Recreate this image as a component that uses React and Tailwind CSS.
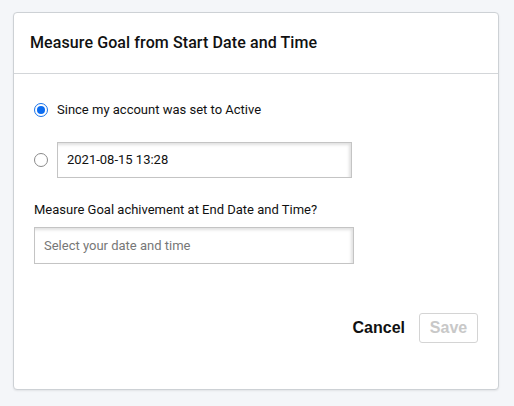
import React from 'react';

const Radio = ({ checked }) => (
  <span
    className={
      checked
        ? 'flex h-[14px] w-[14px] shrink-0 items-center justify-center rounded-full border border-[#1a73e8] bg-white'
        : 'flex h-[14px] w-[14px] shrink-0 items-center justify-center rounded-full border border-[#8a8a8a] bg-white'
    }
  >
    {checked && <span className="h-[8px] w-[8px] rounded-full bg-[#0b6cf0]"></span>}
  </span>
);

const App = () => {
  return (
    <div className="h-[406px] w-[514px] bg-[#f4f6f9] pl-[13px] pt-[12px] font-['Roboto',sans-serif] text-[#111]">
      <div className="h-[378px] w-[486px] rounded-[4px] border border-[#cdd1d5] bg-white shadow-[0_1px_2px_rgba(0,0,0,0.08)]">
        {/* Header */}
        <div className="flex h-[61px] items-center border-b border-[#d3d6d9] px-[16px]">
          <h2 className="text-[16px] font-medium tracking-[0.1px]">Measure Goal from Start Date and Time</h2>
        </div>

        {/* Body */}
        <div className="pl-[20px] pr-[19px]">
          <div className="mt-[29px] flex h-[14px] items-center gap-[9px]">
            <Radio checked />
            <span className="text-[13px]">Since my account was set to Active</span>
          </div>

          <div className="mt-[25px] flex items-center gap-[9px]">
            <Radio />
            <div className="flex h-[36px] w-[295px] items-center border border-[#c4c4c4] px-[9px] text-[13px] shadow-[inset_-2px_2px_3px_rgba(0,0,0,0.12)]">
              2021-08-15 13:28
            </div>
          </div>

          <p className="mt-[24px] text-[13px] leading-[16px]">Measure Goal achivement at End Date and Time?</p>

          <div className="mt-[9px] flex h-[37px] w-[320px] items-center border border-[#c4c4c4] px-[9px] text-[13px] text-[#777] shadow-[inset_-2px_2px_3px_rgba(0,0,0,0.12)]">
            Select your date and time
          </div>

          <div className="mt-[49px] flex items-center justify-end gap-[14px] pr-[1px] font-['Liberation_Sans',Arial,sans-serif]">
            <button className="text-[16px] font-bold text-[#111]">Cancel</button>
            <button className="h-[30px] w-[59px] rounded-[3px] border border-[#d4d4d4] text-[16px] font-bold text-[#c8c8c8]">
              Save
            </button>
          </div>
        </div>
      </div>
    </div>
  );
};

export default App;
